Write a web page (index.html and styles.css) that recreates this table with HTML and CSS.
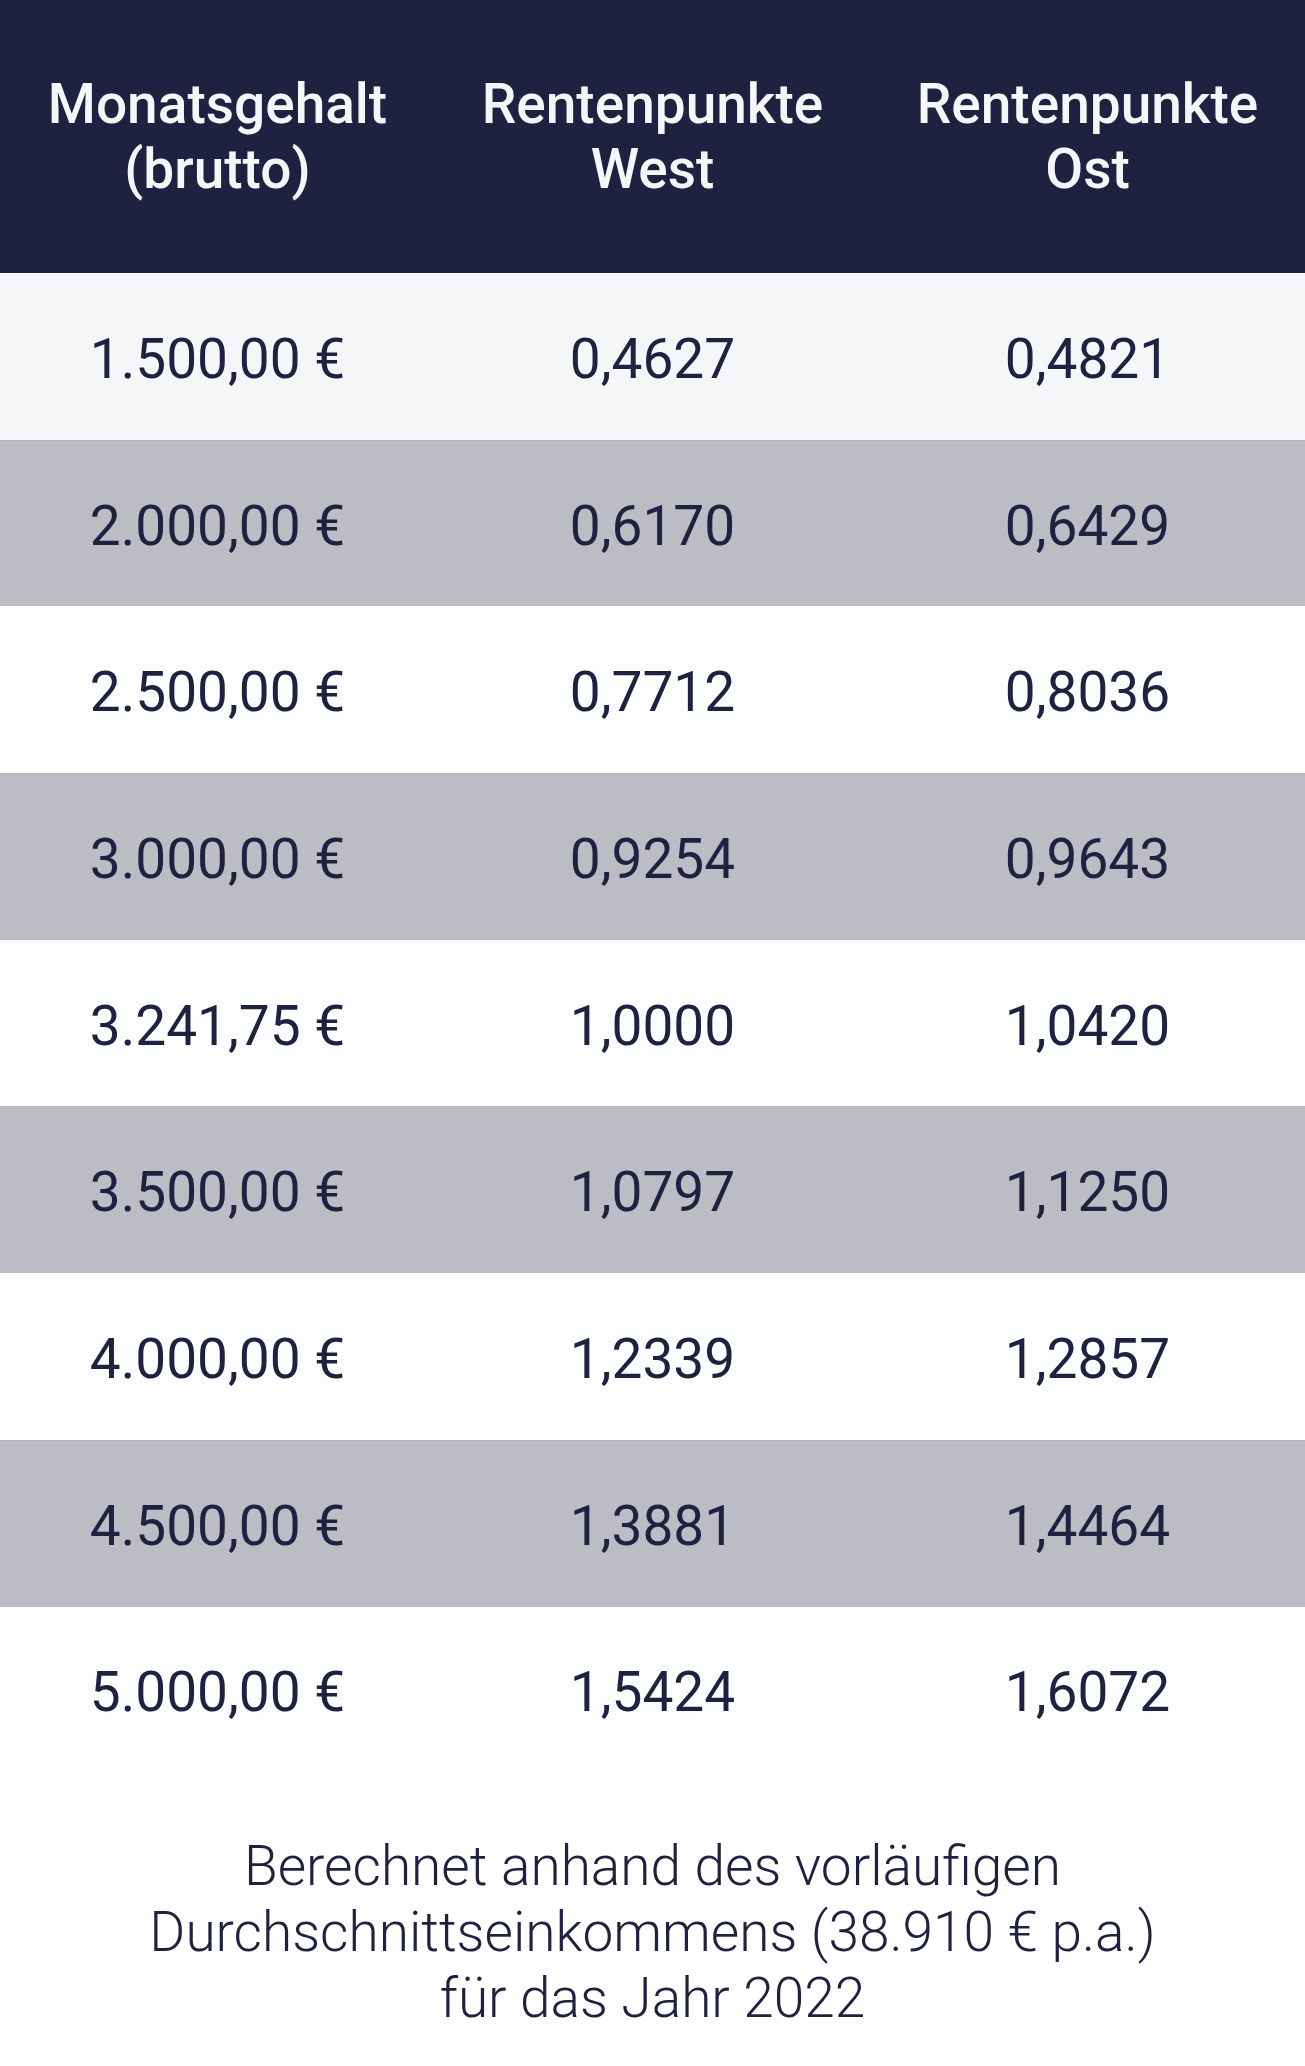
FILE: index.html
```html
<!DOCTYPE html>
<html lang="de">
<head>
<meta charset="utf-8">
<title>Rentenpunkte</title>
<link rel="stylesheet" href="styles.css">
</head>
<body>
<div class="table">
  <div class="row head">
    <div class="cell">Monatsgehalt<br>(brutto)</div>
    <div class="cell">Rentenpunkte<br>West</div>
    <div class="cell">Rentenpunkte<br>Ost</div>
  </div>
  <div class="row first"><div class="cell">1.500,00 €</div><div class="cell">0,4627</div><div class="cell">0,4821</div></div>
  <div class="row alt"><div class="cell">2.000,00 €</div><div class="cell">0,6170</div><div class="cell">0,6429</div></div>
  <div class="row"><div class="cell">2.500,00 €</div><div class="cell">0,7712</div><div class="cell">0,8036</div></div>
  <div class="row alt"><div class="cell">3.000,00 €</div><div class="cell">0,9254</div><div class="cell">0,9643</div></div>
  <div class="row"><div class="cell">3.241,75 €</div><div class="cell">1,0000</div><div class="cell">1,0420</div></div>
  <div class="row alt"><div class="cell">3.500,00 €</div><div class="cell">1,0797</div><div class="cell">1,1250</div></div>
  <div class="row"><div class="cell">4.000,00 €</div><div class="cell">1,2339</div><div class="cell">1,2857</div></div>
  <div class="row alt"><div class="cell">4.500,00 €</div><div class="cell">1,3881</div><div class="cell">1,4464</div></div>
  <div class="row"><div class="cell">5.000,00 €</div><div class="cell">1,5424</div><div class="cell">1,6072</div></div>
</div>
<p class="note">Berechnet anhand des vorläufigen<br>Durchschnittseinkommens (38.910 € p.a.)<br>für das Jahr 2022</p>
</body>
</html>
```

FILE: styles.css
```css
html, body {
  margin: 0;
  padding: 0;
  background: #ffffff;
}
body {
  width: 1305px;
  font-family: Roboto, "Liberation Sans", sans-serif;
  color: #1f2140;
}
.table {
  display: flex;
  flex-direction: column;
}
.row {
  display: grid;
  grid-template-columns: 1fr 1fr 1fr;
  height: 166.7px;
  background: #fcfdfd;
  font-size: 55px;
  font-weight: 400;
}
.row .cell {
  padding-top: 5px;
}
.row.first {
  background: #f5f6f8;
}
.row.alt {
  background: #bcbcc5;
  box-shadow: inset 0 1px 0 #b5b5bd;
}
.row.head {
  height: 273px;
  background: #1f2140;
  color: #f5f6f8;
  font-size: 55px;
  font-weight: 500;
  line-height: 65px;
}
.row.head .cell {
  padding-top: 0;
}
.cell {
  display: flex;
  align-items: center;
  justify-content: center;
  text-align: center;
}
.note {
  margin: 0;
  padding-top: 60px;
  text-align: center;
  font-size: 55px;
  font-weight: 300;
  line-height: 66px;
  color: #1f2140;
}
```
